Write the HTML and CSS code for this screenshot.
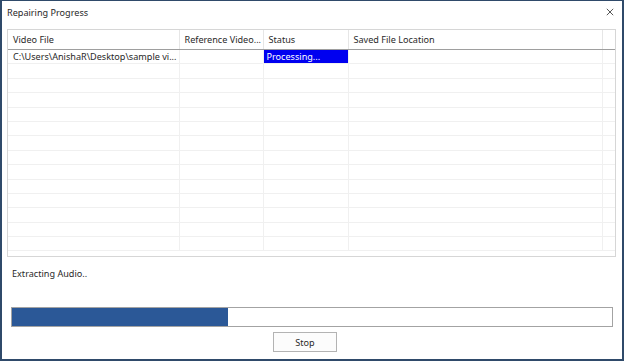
FILE: index.html
```html
<!DOCTYPE html>
<html lang="en">

<head>
  <meta charset="UTF-8">
  <title>Repairing Progress</title>
  <link rel="stylesheet" href="styles.css">
</head>

<body>
  <div class="window">
    <header class="titlebar">
      <span class="title">Repairing Progress</span>
      <button class="close" aria-label="Close">
        <svg viewBox="0 0 10 10" width="8" height="8" stroke="currentColor" stroke-width="1.1">
          <line x1="1" y1="1" x2="9" y2="9"></line>
          <line x1="9" y1="1" x2="1" y2="9"></line>
        </svg>
      </button>
    </header>

    <div class="listview">
      <table>
        <colgroup>
          <col class="c-video">
          <col class="c-ref">
          <col class="c-status">
          <col class="c-saved">
          <col class="c-pad">
        </colgroup>
        <thead>
          <tr>
            <th>Video File</th>
            <th>Reference Video...</th>
            <th>Status</th>
            <th>Saved File Location</th>
            <th></th>
          </tr>
        </thead>
        <tbody>
          <tr>
            <td>C:\Users\AnishaR\Desktop\sample vi...</td>
            <td></td>
            <td class="selected">Processing...</td>
            <td></td>
            <td></td>
          </tr>
          <tr><td></td><td></td><td></td><td></td><td></td></tr>
          <tr><td></td><td></td><td></td><td></td><td></td></tr>
          <tr><td></td><td></td><td></td><td></td><td></td></tr>
          <tr><td></td><td></td><td></td><td></td><td></td></tr>
          <tr><td></td><td></td><td></td><td></td><td></td></tr>
          <tr><td></td><td></td><td></td><td></td><td></td></tr>
          <tr><td></td><td></td><td></td><td></td><td></td></tr>
          <tr><td></td><td></td><td></td><td></td><td></td></tr>
          <tr><td></td><td></td><td></td><td></td><td></td></tr>
          <tr><td></td><td></td><td></td><td></td><td></td></tr>
          <tr><td></td><td></td><td></td><td></td><td></td></tr>
          <tr><td></td><td></td><td></td><td></td><td></td></tr>
          <tr><td></td><td></td><td></td><td></td><td></td></tr>
        </tbody>
      </table>
    </div>

    <p class="step">Extracting Audio..</p>

    <div class="progress">
      <div class="progress-fill" style="width: 36%"></div>
    </div>

    <div class="actions">
      <button class="btn">Stop</button>
    </div>
  </div>
</body>

</html>
```

FILE: styles.css
```css
body {
  margin: 0;
  font-family: "Noto Sans", "Open Sans", sans-serif;
  font-size: 9.1px;
  color: hsl(0deg 0% 16%);
  background: #fff;
}

.window {
  box-sizing: border-box;
  width: 624px;
  height: 361px;
  border: 2px solid hsl(213deg 38% 30%);
  border-top-width: 1px;
  background: #fff;
  display: flex;
  flex-direction: column;
}

.titlebar {
  display: flex;
  justify-content: space-between;
  align-items: center;
  height: 22px;
  padding: 0 8px 0 5px;
  margin-bottom: 6px;
}

.close {
  background: transparent;
  border: none;
  padding: 0;
  color: hsl(0deg 0% 25%);
  display: flex;
}

.listview {
  margin-left: 5px;
  width: 609px;
  height: 228px;
  box-sizing: border-box;
  border: 1px solid hsl(0deg 0% 84%);
  overflow: hidden;
}

table {
  border-collapse: collapse;
  table-layout: fixed;
  width: 594px;
}

.c-video { width: 171px; }
.c-ref { width: 84px; }
.c-status { width: 85px; }
.c-saved { width: 254px; }
.c-pad { width: 14px; }

th {
  font-weight: 400;
  text-align: left;
  height: 19px;
  padding: 0 0 0 5px;
  border-right: 1px solid hsl(0deg 0% 90%);
  border-bottom: 1px solid hsl(0deg 0% 62%);
  white-space: nowrap;
  overflow: hidden;
}

td {
  height: 13.4px;
  padding: 0 0 0 5px;
  border-right: 1px solid hsl(0deg 0% 94%);
  border-bottom: 1px solid hsl(0deg 0% 94%);
  white-space: nowrap;
  overflow: hidden;
  line-height: 13px;
}

td.selected {
  background: hsl(240deg 100% 47%);
  color: #fff;
  padding-left: 3px;
}

.step {
  margin: 10px 0 0 10px;
  line-height: 14px;
}

.progress {
  margin: 26px 0 0 9px;
  width: 602px;
  height: 20px;
  box-sizing: border-box;
  border: 1px solid hsl(0deg 0% 64%);
  background: #fff;
}

.progress-fill {
  height: 100%;
  background: hsl(215deg 56% 38%);
}

.actions {
  display: flex;
  margin-top: 5px;
  padding-left: 271px;
}

.btn {
  width: 64px;
  height: 20px;
  font: inherit;
  color: inherit;
  background: hsl(0deg 0% 99%);
  border: 1px solid hsl(0deg 0% 70%);
  padding: 0;
}
```
